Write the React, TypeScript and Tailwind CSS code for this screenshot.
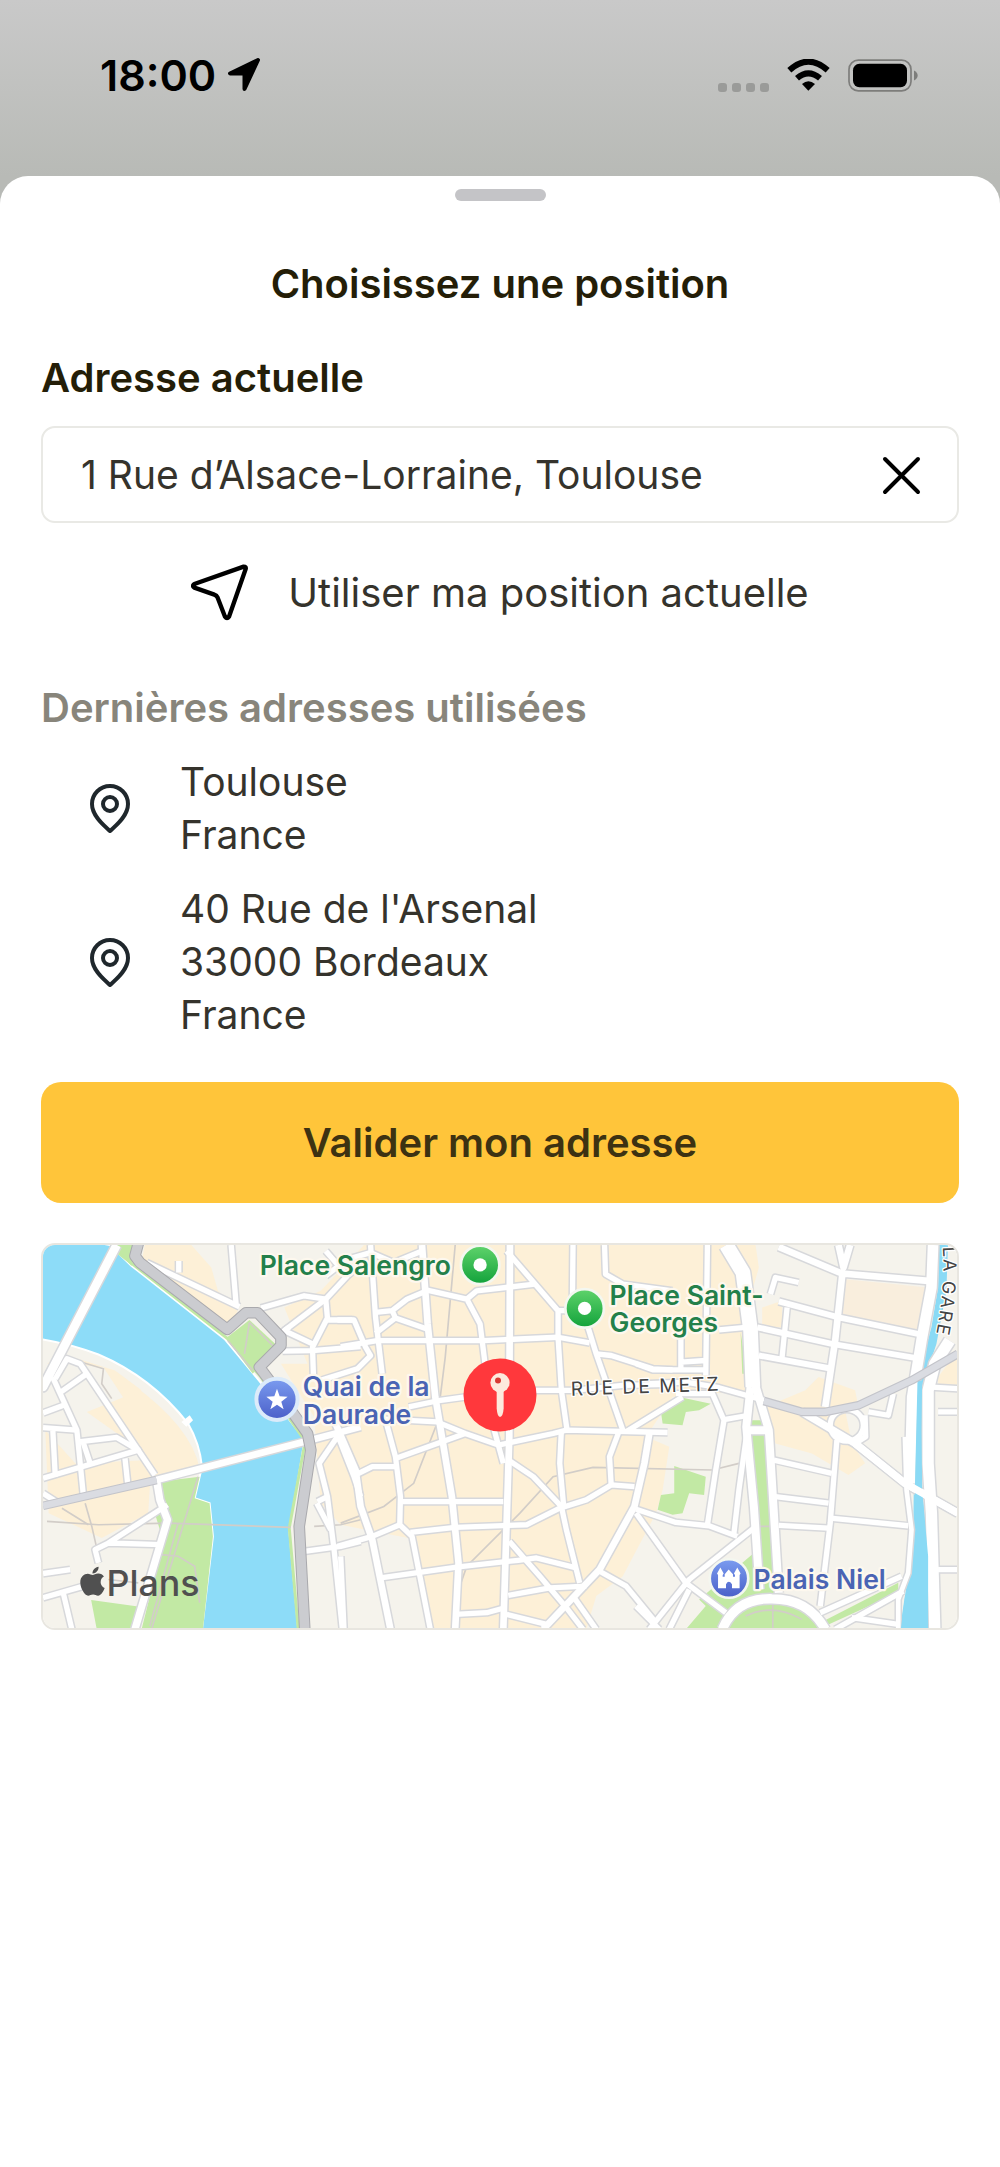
import React, { useState } from 'react';
import { FaApple } from 'react-icons/fa';

type Road = { d: string; w?: number };

const recentAddresses = [
    ['Toulouse', 'France'],
    ["40 Rue de l'Arsenal", '33000 Bordeaux', 'France'],
];

// The map is cut in three tiles, each with its own x origin
const WEST = 0;
const CENTRE = 930;
const EAST = 1830;

const roads: { x: number; items: Road[] }[] = [
    {
        x: WEST,
        items: [
            { d: 'M70 445L105 385L145 400L370 735' },
            { d: 'M62 440L135 600L155 800' },
            { d: 'M80 490L165 430M33 548L95 525M33 592L135 600M62 590L70 740' },
            { d: 'M33 745L320 660L255 622L140 635M155 640L175 700M280 685L288 760' },
            { d: 'M33 790L80 820' },
            { d: 'M375 750L385 810L408 870L310 1200', w: 22 },
            { d: 'M408 825L230 940L190 960L200 1000M230 940L390 945' },
            { d: 'M33 1032L115 1020M33 1105L155 1070M95 1095L120 1200' },
            { d: 'M600 42L615 222M345 95L625 228M442 90L442 125' },
            { d: 'M690 232L820 195L885 205M950 135L885 205L760 300L845 340M885 60L950 135L990 100' },
            { d: 'M885 205L890 262L845 350L848 440M890 268L965 268' },
            { d: 'M755 362L845 360L990 348M760 300L775 290' },
            { d: 'M915 600L970 740L990 800M920 620L865 700L890 800L910 960L935 1200' },
            { d: 'M860 815L890 800M858 820L900 900M820 965L930 950L990 935' },
            { d: 'M33 450L33 470L255 42', w: 26 },
            { d: 'M375 750L820 635L990 590', w: 20 },
        ],
    },
    {
        x: CENTRE,
        items: [
            { d: 'M-45 135L20 85L90 65L160 95L245 60' },
            { d: 'M90 42L105 260L125 430' },
            { d: 'M245 42L262 280L285 500L335 800L355 1000L345 1200', w: 20 },
            { d: 'M510 42L508 620L490 1200', w: 20 },
            { d: 'M0 348L110 330L430 330L655 320L750 337' },
            { d: 'M-10 268L40 268L75 350L90 375L50 415L-60 450' },
            { d: 'M105 245L155 240L200 205L260 180M105 308L165 262L260 295M155 240L165 262' },
            { d: 'M260 178L380 205L410 180L585 160M380 205L420 280L435 400' },
            { d: 'M500 60L655 240L655 330M655 320L665 480L682 600' },
            { d: 'M700 42L698 240M655 240L730 240L770 370L850 600' },
            { d: 'M795 42L798 130L850 160L1000 180' },
            { d: 'M770 370L815 375L940 415L1000 418' },
            { d: 'M205 530L290 512L375 500L590 480L700 480L850 465L990 462' },
            { d: 'M100 565L290 575L375 610L475 645L640 610L680 600L985 607' },
            { d: 'M138 580L165 680L180 800L178 885L215 920L270 1200' },
            { d: 'M-20 570L45 720L60 830L95 930L150 1200', w: 20 },
            { d: 'M165 685L375 610M45 735L95 710L165 710' },
            { d: 'M180 815L490 815M-10 950L95 920L178 885' },
            { d: 'M210 908L345 893L560 885L660 835L740 810L815 765L885 770' },
            { d: 'M120 1045L355 1012L535 992L590 985L710 1015' },
            { d: 'M345 1155L440 1150L495 1135M500 1155L620 1185M505 1098L630 1075L740 1070' },
            { d: 'M508 935L600 1040L680 1135L730 1200' },
            { d: 'M460 590L490 700M505 690L580 740L665 830L680 900L720 1060' },
            { d: 'M665 600L660 700L672 830' },
            { d: 'M610 1200L780 1020L885 830L915 700L930 610', w: 20 },
            { d: 'M840 600L810 680L815 765M700 1100L770 1200M780 1025L860 1070L950 1180' },
            { d: 'M860 605L1030 500M0 980L10 1200' },
        ],
    },
    {
        x: EAST,
        items: [
            { d: 'M205 42L200 435M-10 400L40 418L200 418M125 320L125 420M125 395L200 390' },
            { d: 'M240 298L320 290M30 460L140 455L240 472L375 510' },
            { d: 'M110 490L220 490L255 570L230 720L205 885M255 568L330 555' },
            { d: 'M355 290L580 340L830 382M420 212L600 260L850 312M360 375L580 415', w: 18 },
            { d: 'M395 190L410 140L480 155M445 230L430 380' },
            { d: 'M420 48L610 128L870 150M600 42L615 110L635 42M612 125L590 330L560 530', w: 20 },
            { d: 'M575 585A50 48 0 1 0 675 585A50 48 0 1 0 575 585' },
            { d: 'M690 545L750 555L765 490M680 555L682 620L650 640' },
            { d: 'M490 545L650 640L800 760L960 850', w: 22 },
            { d: 'M595 630L575 880L545 1130' },
            { d: 'M405 690L580 730M410 800L570 820M420 887L570 895M575 865L810 888' },
            { d: 'M325 600L300 780L285 910M-10 838L110 878L210 888L295 920' },
            { d: 'M345 895L150 1050L30 1200M-10 850L140 1060L260 1150M-10 1130L60 1200' },
            { d: 'M150 1080L90 1200M545 1150L790 1040M590 1200L795 1085' },
            { d: 'M640 1165L780 1185M880 470L960 475M900 545L960 545M900 1020L960 1020' },
            { d: 'M262 42L312 125L335 300L342 470', w: 44 },
            { d: 'M335 470L322 590L345 830L362 1080', w: 24 },
            { d: 'M345 450L390 600L420 1090M330 600L390 600', w: 24 },
            { d: 'M885 42L880 170L850 330L822 500L815 760', w: 32 },
            { d: 'M800 620L805 780L820 900L810 1030L780 1110L780 1200', w: 14 },
            { d: 'M935 330L890 400L870 480L870 700L880 850L890 1200', w: 34 },
            { d: 'M250 1200Q290 1105 400 1108Q510 1108 560 1200', w: 28 },
        ],
    },
];

const LocationArrow = () => (
    <svg viewBox="0 0 34 34" className="h-[34px] w-[34px]" aria-hidden="true">
        <path
            d="M31 2L3 15.500H17.500V31Z"
            fill="#000"
            stroke="#000"
            strokeWidth="4"
            strokeLinejoin="round"
        />
    </svg>
);

const WifiIcon = () => (
    <svg viewBox="0 0 129 96" className="h-8 w-[43px]" aria-hidden="true">
        <path d="M7 34Q64 -18 122 34" fill="none" stroke="#000" strokeWidth="18" />
        <path d="M30 58Q64 28 99 58" fill="none" stroke="#000" strokeWidth="18" />
        <path d="M45 75Q64 59 84 75L64 95Z" fill="#000" />
    </svg>
);

const BatteryIcon = () => (
    <svg viewBox="0 0 210 98" className="h-[33px] w-[70px]" aria-hidden="true">
        <rect x="3" y="3" width="186" height="92" rx="28" fill="none" stroke="#7d7d7b" strokeWidth="5" />
        <rect x="15" y="14" width="162" height="70" rx="19" fill="#000" />
        <path d="M198 34Q209 40 209 49Q209 58 198 64Z" fill="#7d7d7b" />
    </svg>
);

const PinIcon = () => (
    <svg viewBox="0 0 40 50" className="h-[50px] w-10 shrink-0" fill="none" stroke="#1f272c" strokeWidth="4" aria-hidden="true">
        <path d="M20 48C16 44 2 34 2 21A18 18 0 0 1 38 21C38 34 24 44 20 48Z" strokeLinejoin="round" />
        <circle cx="20" cy="21" r="7" />
    </svg>
);

const StatusBar = () => (
    <header className="flex h-44 items-center justify-between bg-linear-to-b from-[#c9c9c9] to-[#b8bab6] pb-[26px] pr-[82px] pl-[100px]">
        <div className="flex items-center gap-[11px]">
            <span className="text-[43px] leading-[53px] font-semibold text-black">18:00</span>
            <LocationArrow />
        </div>
        <div className="flex items-center gap-[18px]">
            <div className="flex gap-[5px] pt-6">
                {[0, 1, 2, 3].map((dot) => (
                    <span key={dot} className="h-[9px] w-[9px] rounded-[3px] bg-[#9a9b99]" />
                ))}
            </div>
            <WifiIcon />
            <BatteryIcon />
        </div>
    </header>
);

const MapLabel = ({ x, y, fill, children }: { x: number; y: number; fill: string; children: string }) => (
    <text x={x} y={y} fontSize="80" fontWeight="600" fill={fill} stroke="#fdf8ee" strokeWidth="14" strokeLinejoin="round" paintOrder="stroke">
        {children}
    </text>
);

const AddressMap = () => (
    <svg
        viewBox="33 42 2754 1155"
        className="mt-10 block w-full rounded-[14px] border-2 border-[#e8e6e0]"
        role="img"
        aria-label="Plan de Toulouse"
    >
        <defs>
            <linearGradient id="poiGreen" x1="0" y1="0" x2="0" y2="1">
                <stop offset="0" stopColor="#5fd36b" />
                <stop offset="1" stopColor="#12a23b" />
            </linearGradient>
            <linearGradient id="poiBlue" x1="0" y1="0" x2="0" y2="1">
                <stop offset="0" stopColor="#7b9cf0" />
                <stop offset="1" stopColor="#4a5fc8" />
            </linearGradient>
        </defs>

        <rect x="0" y="0" width="2850" height="1250" fill="#f5f3ec" />

        {/* Built-up areas */}
        <g fill="#fdf0d7">
            <path d="M340 42H480L540 110L560 180L620 240L590 290L330 90Z" />
            <path d="M760 230L870 180L1000 42H2180L2190 110L2150 250L2160 480L1930 500L1850 620L1920 650L1900 780L1880 850L1780 1040L1700 1100L1670 1200H1200L1160 930L930 885L870 820L850 560L750 400L830 400Z" />
            <path d="M300 460Q480 590 505 715L375 742L270 620L165 545L290 495Z" />
            <path d="M40 600L130 700L360 690L350 850L210 925L50 850Z" />
            <path d="M45 400L90 370L250 420L330 480L280 510L215 410L120 400Z" />
            <g transform="translate(1830 0)">
                <path d="M380 530L500 480L540 440L650 480L660 530L620 540L640 640L680 700L630 735L520 670L410 640Z" />
                <path d="M620 145L870 170L845 300L605 255Z" fill="#f9eedd" />
                <path d="M370 230L430 210L430 290L370 290Z" />
                <path d="M900 440L960 360V470H900Z" />
            </g>
        </g>

        {/* Garonne */}
        <path
            d="M0 0L235 42L300 105L580 325L700 470L815 620L818 650L800 760L775 900L802 1200H512L545 920L535 820L490 805L512 710Q505 640 470 580Q360 440 200 372Q100 335 0 322Z"
            fill="#8ddcf8"
            stroke="#fff"
            strokeWidth="6"
        />
        <path d="M450 575L475 555L485 570L465 590Z" fill="#fff" />

        {/* Parks */}
        <g fill="#c2e9a4">
            <path d="M240 42H310L300 105Z" />
            <path d="M255 62L590 325L690 440L815 622M820 650L775 895L802 1200" fill="none" stroke="#c2e9a4" strokeWidth="9" />
            <path d="M585 322L655 268L738 345L665 430Z" />
            <path d="M385 755L505 740L490 805L535 820L545 920L515 1200H330L410 880Z" />
            <path d="M178 1112L325 1132L310 1200H195ZM370 850L395 830L410 890L385 900Z" />
            <g transform="translate(1830 0)">
                <path d="M70 580L65 545L120 500L215 520L180 540L140 545L130 585Z" />
                <path d="M105 708L200 740L195 795L150 790L130 850L100 855L55 840L65 795L105 790Z" />
                <path d="M305 305L325 430H310Z" />
                <path d="M180 1110L345 970V1060L400 1090L260 1150L240 1200H140L200 1130Z" />
                <path d="M335 570H375L405 900L412 1100H362L345 830Z" />
                <path d="M545 1180L780 1060V1090L560 1190Z" />
                <circle cx="402" cy="1250" r="145" />
            </g>
        </g>

        {/* Footpaths and rail */}
        <g fill="none" stroke="#d2cdc8" strokeWidth="5">
            <path d="M45 875L200 885L410 880L780 893M850 890L930 885L990 870" />
            <path d="M160 820L180 890L205 1000M90 835L170 885M500 740L360 1200M440 880L355 1190M390 975L440 980L490 1010L505 1120" />
            <path d="M655 275L640 370M590 330L665 420M655 275L725 345M100 380L215 415L210 460L240 505" />
            <path d="M230 1050L320 1060" />
            <path d="M1275 42L1245 380L1220 580L1150 760L1060 830L930 880M1275 1110L1310 1010L1470 850L1570 740L1690 712L2050 720L2130 700" />
            <path d="M2232 1120V1200M2180 890H2230M2150 1160Q2230 1120 2320 1170" />
        </g>

        {/* Canal du Midi */}
        <path
            transform="translate(1830 0)"
            d="M903 42H930L925 180L895 340L858 450L850 600L852 780L870 980V1200H785L800 1100L825 950L830 450L850 400L880 290L900 170Z"
            fill="#8adaf5"
        />

        {roads.map((tile) => (
            <g key={tile.x} transform={`translate(${tile.x} 0)`} fill="none" stroke="#d7d8db" strokeLinejoin="round">
                {tile.items.map((road) => (
                    <path key={road.d} d={road.d} strokeWidth={(road.w ?? 16) + 9} />
                ))}
            </g>
        ))}
        {roads.map((tile) => (
            <g key={tile.x} transform={`translate(${tile.x} 0)`} fill="none" stroke="#fff" strokeLinejoin="round">
                {tile.items.map((road) => (
                    <path key={road.d} d={road.d} strokeWidth={road.w ?? 16} />
                ))}
            </g>
        ))}

        {/* The canal shows again between its two quays */}
        <path d="M2668 450L2682 450L2680 600L2682 780L2700 980V1197H2618L2630 1105L2655 1040L2664 900L2660 780Z" fill="#8adaf5" />
        <path d="M2480 640L2630 760L2790 850" fill="none" stroke="#fff" strokeWidth="22" />

        {/* Main roads */}
        <g fill="none" strokeLinejoin="round">
            <path d="M33 828L375 750" stroke="#c3c4ca" strokeWidth="26" />
            <path d="M33 828L375 750" stroke="#dadce2" strokeWidth="20" />
            <path d="M2205 512L2320 545L2390 545L2490 525L2650 450L2790 370" stroke="#c3c4ca" strokeWidth="26" />
            <path d="M2205 512L2320 545L2390 545L2490 525L2650 450L2790 370" stroke="#dadce2" strokeWidth="19" />
            <path
                d="M322 30L310 75L325 95L588 296L645 246H680L750 320V345L685 410L730 470L830 610L840 660L805 890L822 1205"
                stroke="#a9a9ad"
                strokeWidth="35"
            />
            <path
                d="M322 30L310 75L325 95L588 296L645 246H680L750 320V345L685 410L730 470L830 610L840 660L805 890L822 1205"
                stroke="#cbccd0"
                strokeWidth="29"
            />
        </g>

        {/* Street names */}
        <path id="quaiGare" d="M2744 48Q2754 180 2716 350" fill="none" />
        <g fill="#444" stroke="#fff" strokeWidth="8" strokeLinejoin="round" paintOrder="stroke" letterSpacing="6">
            <text transform="translate(1624 496) rotate(-2)" fontSize="58">RUE DE METZ</text>
            <text fontSize="54">
                <textPath href="#quaiGare">LA GARE</textPath>
            </text>
        </g>

        {/* Points of interest */}
        <g stroke="#f4f7f0" strokeWidth="8">
            <circle cx="1350" cy="102" r="58" fill="url(#poiGreen)" />
            <circle cx="1665" cy="233" r="58" fill="url(#poiGreen)" />
            <circle cx="738" cy="507" r="62" fill="url(#poiBlue)" stroke="#dcebfa" strokeWidth="12" />
            <circle cx="2100" cy="1047" r="58" fill="url(#poiBlue)" />
        </g>
        <circle cx="1350" cy="102" r="20" fill="#fff" />
        <circle cx="1665" cy="233" r="20" fill="#fff" />
        <path d="M738 475L746 498L770 499L751 514L758 537L738 523L718 537L725 514L706 499L730 498Z" fill="#fff" />
        <path
            d="M2067 1076V1036L2064 1032L2074 1014L2084 1032L2081 1036V1042H2087V1034L2099 1020L2112 1034V1042H2118V1036L2115 1032L2125 1014L2135 1032L2132 1036V1076H2109V1064Q2099 1050 2091 1064V1076Z"
            fill="#fff"
        />

        <MapLabel x={686} y={131} fill="#23804a">Place Salengro</MapLabel>
        <MapLabel x={1740} y={222} fill="#23804a">Place Saint-</MapLabel>
        <MapLabel x={1740} y={304} fill="#23804a">Georges</MapLabel>
        <MapLabel x={816} y={498} fill="#4a64b4">Quai de la</MapLabel>
        <MapLabel x={816} y={580} fill="#4a64b4">Daurade</MapLabel>
        <MapLabel x={2174} y={1078} fill="#4a64b4">Palais Niel</MapLabel>

        {/* Selected position */}
        <circle cx="1410" cy="494" r="110" fill="#ff383c" />
        <path d="M1400 482H1421V535Q1419 560 1410 560Q1402 560 1400 535Z" fill="#fdeadd" />
        <circle cx="1410" cy="457" r="29" fill="#fdeadd" />
        <circle cx="1404" cy="450" r="9" fill="#d93a34" />

        <FaApple x={132} y={1005} size={100} color="#505050" />
        <text x="224" y="1099" fontSize="108" fontWeight="500" fill="#505050">Plans</text>
    </svg>
);

const App: React.FC = () => {
    const [address, setAddress] = useState('1 Rue d’Alsace-Lorraine, Toulouse');

    return (
        <div className="min-h-screen bg-[#b8bab6] font-['Inter',sans-serif] text-[40px] leading-[53px] text-[#35332c]">
            <StatusBar />

            <main className="flex min-h-[calc(100vh-176px)] flex-col rounded-t-[28px] bg-white px-[41px] pt-[13px] pb-12">
                <div className="h-3 w-[91px] self-center rounded-full bg-[#c4c4c7]" />

                <h1 className="mt-14 text-center font-semibold text-[#241e08]">Choisissez une position</h1>

                <label htmlFor="address" className="mt-[41px] font-semibold text-[#241e08]">
                    Adresse actuelle
                </label>
                <div className="mt-[22px] flex h-[97px] items-center rounded-[14px] border-2 border-[#e9e9e5] pr-[30px] pl-[38px]">
                    <input
                        id="address"
                        type="text"
                        value={address}
                        onChange={(e) => setAddress(e.target.value)}
                        className="min-w-0 flex-1 bg-transparent text-[39px] outline-none"
                    />
                    <button type="button" onClick={() => setAddress('')} aria-label="Effacer l'adresse">
                        <svg viewBox="0 0 52 52" className="h-[52px] w-[52px]" fill="none" stroke="#000" strokeWidth="4" strokeLinecap="round" aria-hidden="true">
                            <path d="M10 10L43 43M43 10L10 43" />
                        </svg>
                    </button>
                </div>

                <button type="button" className="mt-[43px] flex items-center gap-10 self-center">
                    <svg viewBox="0 0 171 171" className="-my-1 h-[57px] w-[57px]" fill="none" stroke="#000" strokeWidth="13" strokeLinejoin="round" aria-hidden="true">
                        <path d="M158 8Q166 8 164 15L114 158Q108 166 102 158L80 101Q77 94 70 92L10 71Q2 66 10 60Z" />
                    </svg>
                    Utiliser ma position actuelle
                </button>

                <h2 className="mt-[62px] font-semibold text-[#88857b]">Dernières adresses utilisées</h2>
                <ul className="mt-[21px] flex flex-col gap-[21px] text-[39px]">
                    {recentAddresses.map((lines) => (
                        <li key={lines.join(' ')}>
                            <button type="button" className="flex w-full items-center gap-[50px] pl-[49px] text-left">
                                <PinIcon />
                                <span>
                                    {lines.map((line) => (
                                        <span key={line} className="block">{line}</span>
                                    ))}
                                </span>
                            </button>
                        </li>
                    ))}
                </ul>

                <button type="button" className="mt-[41px] rounded-[20px] bg-[#ffc53a] py-[34px] font-semibold text-[#3d3212]">
                    Valider mon adresse
                </button>

                <AddressMap />
            </main>
        </div>
    );
};

export default App;
